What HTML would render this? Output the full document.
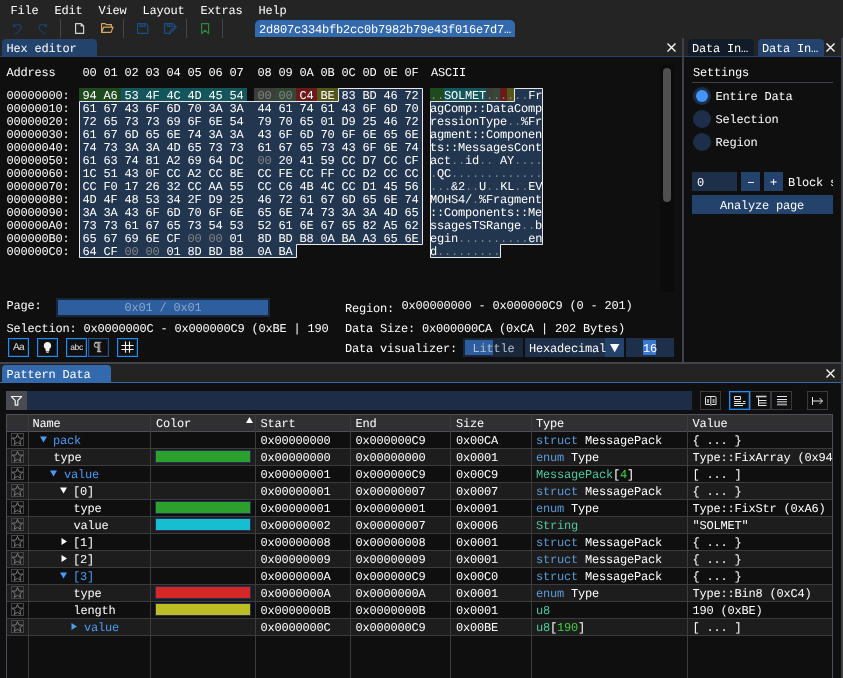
<!DOCTYPE html><html><head><meta charset="utf-8"><style>
html,body{margin:0;padding:0;}
body{width:843px;height:678px;overflow:hidden;position:relative;background:#0f0f0f;font-family:"Liberation Mono",monospace;font-size:12px;letter-spacing:-0.2px;text-rendering:geometricPrecision;color:#fff;}
.t{position:absolute;white-space:pre;line-height:13px;}
.r{position:absolute;}
svg{position:absolute;overflow:visible;}
</style></head><body><div style="position:absolute;left:0;top:0;width:843px;height:678px;will-change:transform;">
<div class="r" style="left:0px;top:0px;width:843px;height:56px;background:#242424;"></div>
<div class="t" style="left:10.5px;top:5.40px;color:#fff;">File</div>
<div class="t" style="left:54.5px;top:5.40px;color:#fff;">Edit</div>
<div class="t" style="left:98.5px;top:5.40px;color:#fff;">View</div>
<div class="t" style="left:142.5px;top:5.40px;color:#fff;">Layout</div>
<div class="t" style="left:200.5px;top:5.40px;color:#fff;">Extras</div>
<div class="t" style="left:258.5px;top:5.40px;color:#fff;">Help</div>
<div class="r" style="left:60px;top:19px;width:1px;height:19px;background:#474747;"></div>
<div class="r" style="left:123px;top:19px;width:1px;height:19px;background:#474747;"></div>
<div class="r" style="left:186px;top:19px;width:1px;height:19px;background:#474747;"></div>
<div class="r" style="left:222px;top:19px;width:1px;height:19px;background:#474747;"></div>
<svg style="left:0;top:0" width="843" height="60"><g stroke="#173e69" stroke-width="1.3" fill="none" stroke-linecap="round"><path d="M14.5 25.3C17 23.6 21.3 24.6 21.1 27.8C21 29.6 18.5 31.8 15.3 33.8"/></g><path d="M12.8 23.2L13.2 27.4L17.2 26.6Z" fill="#173e69"/><g transform="translate(60.2 0) scale(-1 1)"><g stroke="#173e69" stroke-width="1.3" fill="none" stroke-linecap="round"><path d="M14.5 25.3C17 23.6 21.3 24.6 21.1 27.8C21 29.6 18.5 31.8 15.3 33.8"/></g><path d="M12.8 23.2L13.2 27.4L17.2 26.6Z" fill="#173e69"/></g><path d="M75.6 23.6H81.2L83.6 26V33.4H75.6Z M81.2 23.6V26H83.6" fill="none" stroke="#d2d2d2" stroke-width="1.2" stroke-linejoin="round"/><path d="M101.6 32.4V23.6H105.2L106.2 24.6H111.4V26.6 M101.6 32.4L103.6 27.2H113L111 32.4Z" fill="none" stroke="#d8a860" stroke-width="1.2" stroke-linejoin="round"/><path d="M137.6 23.6H146L147.8 25.4V33.4H137.6Z M140.2 23.6V26.4H145V23.6" fill="none" stroke="#1b4c84" stroke-width="1.2" stroke-linejoin="round"/><path d="M142 26.4V24.2" stroke="#1b4c84" stroke-width="1.2"/><path d="M170 33.4H164.6V23.6H173L174.6 25.2V26.5 M167.2 23.6V26.4H172V23.6 M169.5 24.2V26.2" fill="none" stroke="#1b4c84" stroke-width="1.2" stroke-linejoin="round"/><path d="M169.4 34L170 31.2L175.2 26L176.4 27.2L171.2 32.4Z" fill="none" stroke="#1b4c84" stroke-width="1.1" stroke-linejoin="round"/><path d="M201.6 23.6H208.6V33.6L205.1 30.2L201.6 33.6Z" fill="none" stroke="#2a8a38" stroke-width="1.2" stroke-linejoin="round"/></svg>
<div class="r" style="left:255px;top:20px;width:260px;height:17px;background:#3369ad;border-radius:5px 5px 0 0;"></div>
<div class="t" style="left:259px;top:24.40px;color:#fff;">2d807c334bfb2cc0b7982b79e43f016e7d7…</div>
<div class="r" style="left:2px;top:39px;width:95px;height:17px;background:#23436c;border-radius:4px 4px 0 0;"></div>
<div class="t" style="left:6.5px;top:43.40px;color:#fff;">Hex editor</div>
<div class="r" style="left:0px;top:56px;width:682px;height:1px;background:#23436c;"></div>
<div class="r" style="left:684px;top:56px;width:157px;height:1px;background:#23436c;"></div>
<svg style="left:667px;top:43px" width="9" height="9"><path d="M0.5 0.5L8.5 8.5M8.5 0.5L0.5 8.5" stroke="#fff" stroke-width="1.3"/></svg>
<div class="r" style="left:682px;top:38px;width:2px;height:324px;background:#404048;"></div>
<div class="r" style="left:841px;top:38px;width:2px;height:640px;background:#404048;"></div>
<div class="t" style="left:6.5px;top:67.40px;color:#fff;">Address</div>
<div class="t" style="left:82.5px;top:67.40px;color:#fff;">00 01 02 03 04 05 06 07</div>
<div class="t" style="left:257.5px;top:67.40px;color:#fff;">08 09 0A 0B 0C 0D 0E 0F</div>
<div class="t" style="left:431px;top:67.40px;color:#fff;">ASCII</div>
<svg style="left:0;top:0" width="843" height="678"><path d="M338 88H423V245H297V258H79V101H338Z" fill="#22364f"/><path d="M514 88H543V245H501V258H430V101H514Z" fill="#22364f"/></svg>
<div class="r" style="left:79px;top:88px;width:42px;height:13px;background:#1e4a1e;"></div>
<div class="r" style="left:430px;top:88px;width:14px;height:13px;background:#1e4a1e;"></div>
<div class="r" style="left:121px;top:88px;width:126px;height:13px;background:#13565c;"></div>
<div class="r" style="left:444px;top:88px;width:42px;height:13px;background:#13565c;"></div>
<div class="r" style="left:254px;top:88px;width:21px;height:13px;background:#3b3f3b;"></div>
<div class="r" style="left:486px;top:88px;width:7px;height:13px;background:#3b3f3b;"></div>
<div class="r" style="left:275px;top:88px;width:21px;height:13px;background:#354838;"></div>
<div class="r" style="left:493px;top:88px;width:7px;height:13px;background:#354838;"></div>
<div class="r" style="left:296px;top:88px;width:21px;height:13px;background:#6a1a1a;"></div>
<div class="r" style="left:500px;top:88px;width:7px;height:13px;background:#6a1a1a;"></div>
<div class="r" style="left:317px;top:88px;width:21px;height:13px;background:#55561a;"></div>
<div class="r" style="left:507px;top:88px;width:7px;height:13px;background:#55561a;"></div>
<svg style="left:0;top:0" width="843" height="678"><path d="M338.5 88.5H422.5V244.5H296.5V257.5H79.5V101.5H338.5Z" fill="none" stroke="#e8e8e8" stroke-width="1"/><path d="M514.5 88.5H542.5V244.5H500.5V257.5H430.5V101.5H514.5Z" fill="none" stroke="#e8e8e8" stroke-width="1"/></svg>
<div class="t" style="left:6.5px;top:90.40px;color:#fff;">00000000:</div>
<div class="t" style="left:82.5px;top:90.40px;color:#fff;">94</div>
<div class="t" style="left:103.5px;top:90.40px;color:#fff;">A6</div>
<div class="t" style="left:124.5px;top:90.40px;color:#fff;">53</div>
<div class="t" style="left:145.5px;top:90.40px;color:#fff;">4F</div>
<div class="t" style="left:166.5px;top:90.40px;color:#fff;">4C</div>
<div class="t" style="left:187.5px;top:90.40px;color:#fff;">4D</div>
<div class="t" style="left:208.5px;top:90.40px;color:#fff;">45</div>
<div class="t" style="left:229.5px;top:90.40px;color:#fff;">54</div>
<div class="t" style="left:257.5px;top:90.40px;color:#858585;">00</div>
<div class="t" style="left:278.5px;top:90.40px;color:#858585;">00</div>
<div class="t" style="left:299.5px;top:90.40px;color:#fff;">C4</div>
<div class="t" style="left:320.5px;top:90.40px;color:#fff;">BE</div>
<div class="t" style="left:341.5px;top:90.40px;color:#fff;">83</div>
<div class="t" style="left:362.5px;top:90.40px;color:#fff;">BD</div>
<div class="t" style="left:383.5px;top:90.40px;color:#fff;">46</div>
<div class="t" style="left:404.5px;top:90.40px;color:#fff;">72</div>
<div class="t" style="left:430px;top:90.40px;color:#fff;"><span style="color:#858585">.</span><span style="color:#858585">.</span>SOLMET<span style="color:#858585">.</span><span style="color:#858585">.</span><span style="color:#858585">.</span><span style="color:#858585">.</span><span style="color:#858585">.</span><span style="color:#858585">.</span>Fr</div>
<div class="t" style="left:6.5px;top:103.40px;color:#fff;">00000010:</div>
<div class="t" style="left:82.5px;top:103.40px;color:#fff;">61</div>
<div class="t" style="left:103.5px;top:103.40px;color:#fff;">67</div>
<div class="t" style="left:124.5px;top:103.40px;color:#fff;">43</div>
<div class="t" style="left:145.5px;top:103.40px;color:#fff;">6F</div>
<div class="t" style="left:166.5px;top:103.40px;color:#fff;">6D</div>
<div class="t" style="left:187.5px;top:103.40px;color:#fff;">70</div>
<div class="t" style="left:208.5px;top:103.40px;color:#fff;">3A</div>
<div class="t" style="left:229.5px;top:103.40px;color:#fff;">3A</div>
<div class="t" style="left:257.5px;top:103.40px;color:#fff;">44</div>
<div class="t" style="left:278.5px;top:103.40px;color:#fff;">61</div>
<div class="t" style="left:299.5px;top:103.40px;color:#fff;">74</div>
<div class="t" style="left:320.5px;top:103.40px;color:#fff;">61</div>
<div class="t" style="left:341.5px;top:103.40px;color:#fff;">43</div>
<div class="t" style="left:362.5px;top:103.40px;color:#fff;">6F</div>
<div class="t" style="left:383.5px;top:103.40px;color:#fff;">6D</div>
<div class="t" style="left:404.5px;top:103.40px;color:#fff;">70</div>
<div class="t" style="left:430px;top:103.40px;color:#fff;">agComp::DataComp</div>
<div class="t" style="left:6.5px;top:116.40px;color:#fff;">00000020:</div>
<div class="t" style="left:82.5px;top:116.40px;color:#fff;">72</div>
<div class="t" style="left:103.5px;top:116.40px;color:#fff;">65</div>
<div class="t" style="left:124.5px;top:116.40px;color:#fff;">73</div>
<div class="t" style="left:145.5px;top:116.40px;color:#fff;">73</div>
<div class="t" style="left:166.5px;top:116.40px;color:#fff;">69</div>
<div class="t" style="left:187.5px;top:116.40px;color:#fff;">6F</div>
<div class="t" style="left:208.5px;top:116.40px;color:#fff;">6E</div>
<div class="t" style="left:229.5px;top:116.40px;color:#fff;">54</div>
<div class="t" style="left:257.5px;top:116.40px;color:#fff;">79</div>
<div class="t" style="left:278.5px;top:116.40px;color:#fff;">70</div>
<div class="t" style="left:299.5px;top:116.40px;color:#fff;">65</div>
<div class="t" style="left:320.5px;top:116.40px;color:#fff;">01</div>
<div class="t" style="left:341.5px;top:116.40px;color:#fff;">D9</div>
<div class="t" style="left:362.5px;top:116.40px;color:#fff;">25</div>
<div class="t" style="left:383.5px;top:116.40px;color:#fff;">46</div>
<div class="t" style="left:404.5px;top:116.40px;color:#fff;">72</div>
<div class="t" style="left:430px;top:116.40px;color:#fff;">ressionType<span style="color:#858585">.</span><span style="color:#858585">.</span>%Fr</div>
<div class="t" style="left:6.5px;top:129.40px;color:#fff;">00000030:</div>
<div class="t" style="left:82.5px;top:129.40px;color:#fff;">61</div>
<div class="t" style="left:103.5px;top:129.40px;color:#fff;">67</div>
<div class="t" style="left:124.5px;top:129.40px;color:#fff;">6D</div>
<div class="t" style="left:145.5px;top:129.40px;color:#fff;">65</div>
<div class="t" style="left:166.5px;top:129.40px;color:#fff;">6E</div>
<div class="t" style="left:187.5px;top:129.40px;color:#fff;">74</div>
<div class="t" style="left:208.5px;top:129.40px;color:#fff;">3A</div>
<div class="t" style="left:229.5px;top:129.40px;color:#fff;">3A</div>
<div class="t" style="left:257.5px;top:129.40px;color:#fff;">43</div>
<div class="t" style="left:278.5px;top:129.40px;color:#fff;">6F</div>
<div class="t" style="left:299.5px;top:129.40px;color:#fff;">6D</div>
<div class="t" style="left:320.5px;top:129.40px;color:#fff;">70</div>
<div class="t" style="left:341.5px;top:129.40px;color:#fff;">6F</div>
<div class="t" style="left:362.5px;top:129.40px;color:#fff;">6E</div>
<div class="t" style="left:383.5px;top:129.40px;color:#fff;">65</div>
<div class="t" style="left:404.5px;top:129.40px;color:#fff;">6E</div>
<div class="t" style="left:430px;top:129.40px;color:#fff;">agment::Componen</div>
<div class="t" style="left:6.5px;top:142.40px;color:#fff;">00000040:</div>
<div class="t" style="left:82.5px;top:142.40px;color:#fff;">74</div>
<div class="t" style="left:103.5px;top:142.40px;color:#fff;">73</div>
<div class="t" style="left:124.5px;top:142.40px;color:#fff;">3A</div>
<div class="t" style="left:145.5px;top:142.40px;color:#fff;">3A</div>
<div class="t" style="left:166.5px;top:142.40px;color:#fff;">4D</div>
<div class="t" style="left:187.5px;top:142.40px;color:#fff;">65</div>
<div class="t" style="left:208.5px;top:142.40px;color:#fff;">73</div>
<div class="t" style="left:229.5px;top:142.40px;color:#fff;">73</div>
<div class="t" style="left:257.5px;top:142.40px;color:#fff;">61</div>
<div class="t" style="left:278.5px;top:142.40px;color:#fff;">67</div>
<div class="t" style="left:299.5px;top:142.40px;color:#fff;">65</div>
<div class="t" style="left:320.5px;top:142.40px;color:#fff;">73</div>
<div class="t" style="left:341.5px;top:142.40px;color:#fff;">43</div>
<div class="t" style="left:362.5px;top:142.40px;color:#fff;">6F</div>
<div class="t" style="left:383.5px;top:142.40px;color:#fff;">6E</div>
<div class="t" style="left:404.5px;top:142.40px;color:#fff;">74</div>
<div class="t" style="left:430px;top:142.40px;color:#fff;">ts::MessagesCont</div>
<div class="t" style="left:6.5px;top:155.40px;color:#fff;">00000050:</div>
<div class="t" style="left:82.5px;top:155.40px;color:#fff;">61</div>
<div class="t" style="left:103.5px;top:155.40px;color:#fff;">63</div>
<div class="t" style="left:124.5px;top:155.40px;color:#fff;">74</div>
<div class="t" style="left:145.5px;top:155.40px;color:#fff;">81</div>
<div class="t" style="left:166.5px;top:155.40px;color:#fff;">A2</div>
<div class="t" style="left:187.5px;top:155.40px;color:#fff;">69</div>
<div class="t" style="left:208.5px;top:155.40px;color:#fff;">64</div>
<div class="t" style="left:229.5px;top:155.40px;color:#fff;">DC</div>
<div class="t" style="left:257.5px;top:155.40px;color:#858585;">00</div>
<div class="t" style="left:278.5px;top:155.40px;color:#fff;">20</div>
<div class="t" style="left:299.5px;top:155.40px;color:#fff;">41</div>
<div class="t" style="left:320.5px;top:155.40px;color:#fff;">59</div>
<div class="t" style="left:341.5px;top:155.40px;color:#fff;">CC</div>
<div class="t" style="left:362.5px;top:155.40px;color:#fff;">D7</div>
<div class="t" style="left:383.5px;top:155.40px;color:#fff;">CC</div>
<div class="t" style="left:404.5px;top:155.40px;color:#fff;">CF</div>
<div class="t" style="left:430px;top:155.40px;color:#fff;">act<span style="color:#858585">.</span><span style="color:#858585">.</span>id<span style="color:#858585">.</span><span style="color:#858585">.</span> AY<span style="color:#858585">.</span><span style="color:#858585">.</span><span style="color:#858585">.</span><span style="color:#858585">.</span></div>
<div class="t" style="left:6.5px;top:168.40px;color:#fff;">00000060:</div>
<div class="t" style="left:82.5px;top:168.40px;color:#fff;">1C</div>
<div class="t" style="left:103.5px;top:168.40px;color:#fff;">51</div>
<div class="t" style="left:124.5px;top:168.40px;color:#fff;">43</div>
<div class="t" style="left:145.5px;top:168.40px;color:#fff;">0F</div>
<div class="t" style="left:166.5px;top:168.40px;color:#fff;">CC</div>
<div class="t" style="left:187.5px;top:168.40px;color:#fff;">A2</div>
<div class="t" style="left:208.5px;top:168.40px;color:#fff;">CC</div>
<div class="t" style="left:229.5px;top:168.40px;color:#fff;">8E</div>
<div class="t" style="left:257.5px;top:168.40px;color:#fff;">CC</div>
<div class="t" style="left:278.5px;top:168.40px;color:#fff;">FE</div>
<div class="t" style="left:299.5px;top:168.40px;color:#fff;">CC</div>
<div class="t" style="left:320.5px;top:168.40px;color:#fff;">FF</div>
<div class="t" style="left:341.5px;top:168.40px;color:#fff;">CC</div>
<div class="t" style="left:362.5px;top:168.40px;color:#fff;">D2</div>
<div class="t" style="left:383.5px;top:168.40px;color:#fff;">CC</div>
<div class="t" style="left:404.5px;top:168.40px;color:#fff;">CC</div>
<div class="t" style="left:430px;top:168.40px;color:#fff;"><span style="color:#858585">.</span>QC<span style="color:#858585">.</span><span style="color:#858585">.</span><span style="color:#858585">.</span><span style="color:#858585">.</span><span style="color:#858585">.</span><span style="color:#858585">.</span><span style="color:#858585">.</span><span style="color:#858585">.</span><span style="color:#858585">.</span><span style="color:#858585">.</span><span style="color:#858585">.</span><span style="color:#858585">.</span><span style="color:#858585">.</span></div>
<div class="t" style="left:6.5px;top:181.40px;color:#fff;">00000070:</div>
<div class="t" style="left:82.5px;top:181.40px;color:#fff;">CC</div>
<div class="t" style="left:103.5px;top:181.40px;color:#fff;">F0</div>
<div class="t" style="left:124.5px;top:181.40px;color:#fff;">17</div>
<div class="t" style="left:145.5px;top:181.40px;color:#fff;">26</div>
<div class="t" style="left:166.5px;top:181.40px;color:#fff;">32</div>
<div class="t" style="left:187.5px;top:181.40px;color:#fff;">CC</div>
<div class="t" style="left:208.5px;top:181.40px;color:#fff;">AA</div>
<div class="t" style="left:229.5px;top:181.40px;color:#fff;">55</div>
<div class="t" style="left:257.5px;top:181.40px;color:#fff;">CC</div>
<div class="t" style="left:278.5px;top:181.40px;color:#fff;">C6</div>
<div class="t" style="left:299.5px;top:181.40px;color:#fff;">4B</div>
<div class="t" style="left:320.5px;top:181.40px;color:#fff;">4C</div>
<div class="t" style="left:341.5px;top:181.40px;color:#fff;">CC</div>
<div class="t" style="left:362.5px;top:181.40px;color:#fff;">D1</div>
<div class="t" style="left:383.5px;top:181.40px;color:#fff;">45</div>
<div class="t" style="left:404.5px;top:181.40px;color:#fff;">56</div>
<div class="t" style="left:430px;top:181.40px;color:#fff;"><span style="color:#858585">.</span><span style="color:#858585">.</span><span style="color:#858585">.</span>&amp;2<span style="color:#858585">.</span><span style="color:#858585">.</span>U<span style="color:#858585">.</span><span style="color:#858585">.</span>KL<span style="color:#858585">.</span><span style="color:#858585">.</span>EV</div>
<div class="t" style="left:6.5px;top:194.40px;color:#fff;">00000080:</div>
<div class="t" style="left:82.5px;top:194.40px;color:#fff;">4D</div>
<div class="t" style="left:103.5px;top:194.40px;color:#fff;">4F</div>
<div class="t" style="left:124.5px;top:194.40px;color:#fff;">48</div>
<div class="t" style="left:145.5px;top:194.40px;color:#fff;">53</div>
<div class="t" style="left:166.5px;top:194.40px;color:#fff;">34</div>
<div class="t" style="left:187.5px;top:194.40px;color:#fff;">2F</div>
<div class="t" style="left:208.5px;top:194.40px;color:#fff;">D9</div>
<div class="t" style="left:229.5px;top:194.40px;color:#fff;">25</div>
<div class="t" style="left:257.5px;top:194.40px;color:#fff;">46</div>
<div class="t" style="left:278.5px;top:194.40px;color:#fff;">72</div>
<div class="t" style="left:299.5px;top:194.40px;color:#fff;">61</div>
<div class="t" style="left:320.5px;top:194.40px;color:#fff;">67</div>
<div class="t" style="left:341.5px;top:194.40px;color:#fff;">6D</div>
<div class="t" style="left:362.5px;top:194.40px;color:#fff;">65</div>
<div class="t" style="left:383.5px;top:194.40px;color:#fff;">6E</div>
<div class="t" style="left:404.5px;top:194.40px;color:#fff;">74</div>
<div class="t" style="left:430px;top:194.40px;color:#fff;">MOHS4/<span style="color:#858585">.</span>%Fragment</div>
<div class="t" style="left:6.5px;top:207.40px;color:#fff;">00000090:</div>
<div class="t" style="left:82.5px;top:207.40px;color:#fff;">3A</div>
<div class="t" style="left:103.5px;top:207.40px;color:#fff;">3A</div>
<div class="t" style="left:124.5px;top:207.40px;color:#fff;">43</div>
<div class="t" style="left:145.5px;top:207.40px;color:#fff;">6F</div>
<div class="t" style="left:166.5px;top:207.40px;color:#fff;">6D</div>
<div class="t" style="left:187.5px;top:207.40px;color:#fff;">70</div>
<div class="t" style="left:208.5px;top:207.40px;color:#fff;">6F</div>
<div class="t" style="left:229.5px;top:207.40px;color:#fff;">6E</div>
<div class="t" style="left:257.5px;top:207.40px;color:#fff;">65</div>
<div class="t" style="left:278.5px;top:207.40px;color:#fff;">6E</div>
<div class="t" style="left:299.5px;top:207.40px;color:#fff;">74</div>
<div class="t" style="left:320.5px;top:207.40px;color:#fff;">73</div>
<div class="t" style="left:341.5px;top:207.40px;color:#fff;">3A</div>
<div class="t" style="left:362.5px;top:207.40px;color:#fff;">3A</div>
<div class="t" style="left:383.5px;top:207.40px;color:#fff;">4D</div>
<div class="t" style="left:404.5px;top:207.40px;color:#fff;">65</div>
<div class="t" style="left:430px;top:207.40px;color:#fff;">::Components::Me</div>
<div class="t" style="left:6.5px;top:220.40px;color:#fff;">000000A0:</div>
<div class="t" style="left:82.5px;top:220.40px;color:#fff;">73</div>
<div class="t" style="left:103.5px;top:220.40px;color:#fff;">73</div>
<div class="t" style="left:124.5px;top:220.40px;color:#fff;">61</div>
<div class="t" style="left:145.5px;top:220.40px;color:#fff;">67</div>
<div class="t" style="left:166.5px;top:220.40px;color:#fff;">65</div>
<div class="t" style="left:187.5px;top:220.40px;color:#fff;">73</div>
<div class="t" style="left:208.5px;top:220.40px;color:#fff;">54</div>
<div class="t" style="left:229.5px;top:220.40px;color:#fff;">53</div>
<div class="t" style="left:257.5px;top:220.40px;color:#fff;">52</div>
<div class="t" style="left:278.5px;top:220.40px;color:#fff;">61</div>
<div class="t" style="left:299.5px;top:220.40px;color:#fff;">6E</div>
<div class="t" style="left:320.5px;top:220.40px;color:#fff;">67</div>
<div class="t" style="left:341.5px;top:220.40px;color:#fff;">65</div>
<div class="t" style="left:362.5px;top:220.40px;color:#fff;">82</div>
<div class="t" style="left:383.5px;top:220.40px;color:#fff;">A5</div>
<div class="t" style="left:404.5px;top:220.40px;color:#fff;">62</div>
<div class="t" style="left:430px;top:220.40px;color:#fff;">ssagesTSRange<span style="color:#858585">.</span><span style="color:#858585">.</span>b</div>
<div class="t" style="left:6.5px;top:233.40px;color:#fff;">000000B0:</div>
<div class="t" style="left:82.5px;top:233.40px;color:#fff;">65</div>
<div class="t" style="left:103.5px;top:233.40px;color:#fff;">67</div>
<div class="t" style="left:124.5px;top:233.40px;color:#fff;">69</div>
<div class="t" style="left:145.5px;top:233.40px;color:#fff;">6E</div>
<div class="t" style="left:166.5px;top:233.40px;color:#fff;">CF</div>
<div class="t" style="left:187.5px;top:233.40px;color:#858585;">00</div>
<div class="t" style="left:208.5px;top:233.40px;color:#858585;">00</div>
<div class="t" style="left:229.5px;top:233.40px;color:#fff;">01</div>
<div class="t" style="left:257.5px;top:233.40px;color:#fff;">8D</div>
<div class="t" style="left:278.5px;top:233.40px;color:#fff;">BD</div>
<div class="t" style="left:299.5px;top:233.40px;color:#fff;">B8</div>
<div class="t" style="left:320.5px;top:233.40px;color:#fff;">0A</div>
<div class="t" style="left:341.5px;top:233.40px;color:#fff;">BA</div>
<div class="t" style="left:362.5px;top:233.40px;color:#fff;">A3</div>
<div class="t" style="left:383.5px;top:233.40px;color:#fff;">65</div>
<div class="t" style="left:404.5px;top:233.40px;color:#fff;">6E</div>
<div class="t" style="left:430px;top:233.40px;color:#fff;">egin<span style="color:#858585">.</span><span style="color:#858585">.</span><span style="color:#858585">.</span><span style="color:#858585">.</span><span style="color:#858585">.</span><span style="color:#858585">.</span><span style="color:#858585">.</span><span style="color:#858585">.</span><span style="color:#858585">.</span><span style="color:#858585">.</span>en</div>
<div class="t" style="left:6.5px;top:246.40px;color:#fff;">000000C0:</div>
<div class="t" style="left:82.5px;top:246.40px;color:#fff;">64</div>
<div class="t" style="left:103.5px;top:246.40px;color:#fff;">CF</div>
<div class="t" style="left:124.5px;top:246.40px;color:#858585;">00</div>
<div class="t" style="left:145.5px;top:246.40px;color:#858585;">00</div>
<div class="t" style="left:166.5px;top:246.40px;color:#fff;">01</div>
<div class="t" style="left:187.5px;top:246.40px;color:#fff;">8D</div>
<div class="t" style="left:208.5px;top:246.40px;color:#fff;">BD</div>
<div class="t" style="left:229.5px;top:246.40px;color:#fff;">B8</div>
<div class="t" style="left:257.5px;top:246.40px;color:#fff;">0A</div>
<div class="t" style="left:278.5px;top:246.40px;color:#fff;">BA</div>
<div class="t" style="left:430px;top:246.40px;color:#fff;">d<span style="color:#858585">.</span><span style="color:#858585">.</span><span style="color:#858585">.</span><span style="color:#858585">.</span><span style="color:#858585">.</span><span style="color:#858585">.</span><span style="color:#858585">.</span><span style="color:#858585">.</span><span style="color:#858585">.</span></div>
<div class="r" style="left:660px;top:65px;width:14px;height:227px;background:#0b0b0b;"></div>
<div class="r" style="left:663px;top:68px;width:8px;height:134px;background:#4f4f4f;border-radius:4px;"></div>
<div class="t" style="left:6.5px;top:300.40px;color:#fff;">Page:</div>
<div class="r" style="left:56px;top:298px;width:214px;height:19px;background:#19273b;"></div>
<div class="r" style="left:58px;top:300px;width:210px;height:15px;background:#2f5e9e;"></div>
<div class="t" style="left:124.5px;top:302.40px;color:#8aa8d0;">0x01 / 0x01</div>
<div class="t" style="left:6.5px;top:323.40px;color:#fff;">Selection: 0x0000000C - 0x000000C9 (0xBE | 190</div>
<div class="t" style="left:345px;top:303.40px;color:#fff;">Region:</div>
<div class="t" style="left:401.5px;top:300.40px;color:#fff;">0x00000000 - 0x000000C9 (0 - 201)</div>
<div class="t" style="left:345px;top:323.40px;color:#fff;">Data Size: 0x000000CA (0xCA | 202 Bytes)</div>
<div class="t" style="left:345px;top:343.40px;color:#fff;">Data visualizer:</div>
<div class="r" style="left:8px;top:338px;width:19px;height:17px;border:1px solid #1e8fff;box-shadow:inset 0 0 0 1px #1e8fff33;"></div>
<div class="r" style="left:37px;top:338px;width:19px;height:17px;border:1px solid #1e8fff;box-shadow:inset 0 0 0 1px #1e8fff33;"></div>
<div class="r" style="left:66px;top:338px;width:19px;height:17px;border:1px solid #1e8fff;box-shadow:inset 0 0 0 1px #1e8fff33;"></div>
<div class="r" style="left:88px;top:338px;width:19px;height:17px;border:1px solid #24548a;box-shadow:inset 0 0 0 1px #24548a33;"></div>
<div class="r" style="left:117px;top:338px;width:19px;height:17px;border:1px solid #1e8fff;box-shadow:inset 0 0 0 1px #1e8fff33;"></div>
<div class="t" style="left:8px;top:338px;width:21px;height:19px;line-height:19px;text-align:center;font-family:'Liberation Sans',sans-serif;font-size:10px;letter-spacing:-0.5px;color:#e0e0e0;">Aa</div>
<div class="t" style="left:66px;top:338px;width:21px;height:19px;line-height:19px;text-align:center;font-family:'Liberation Sans',sans-serif;font-size:8.5px;letter-spacing:-0.4px;color:#e0e0e0;">abc</div>
<svg style="left:0;top:330px" width="843" height="30"><path d="M47.5 12C45.4 12 43.8 13.7 43.8 15.7C43.8 17.2 44.7 18.2 45.6 19V21H49.4V19C50.3 18.2 51.2 17.2 51.2 15.7C51.2 13.7 49.6 12 47.5 12Z" fill="#f0f0f0"/><path d="M45.9 21.5H49.1V22.1L48.4 22.8H46.6L45.9 22.1Z" fill="#f0f0f0"/><defs><linearGradient id="pg" x1="0" x2="1" y1="0" y2="0"><stop offset="0" stop-color="#c8c8c8"/><stop offset="1" stop-color="#505050"/></linearGradient></defs><path d="M97.8 12.6C95.2 12.6 94.3 13.9 94.3 15C94.3 16.3 95.3 17.3 97.8 17.3" fill="none" stroke="#b0b0b0" stroke-width="1.1"/><path d="M94.8 12.4H101.2" stroke="#b8b8b8" stroke-width="1.2"/><rect x="97.6" y="12.4" width="2.9" height="9.2" fill="url(#pg)"/><path d="M97 21.6H101.2" stroke="#b8b8b8" stroke-width="1.3"/><path d="M125.5 11.6V22.8M129.5 11.6V22.8M121.4 15.5H133.6M121.4 19.5H133.6" stroke="#f4f4f4" stroke-width="1.1"/></svg>
<div class="r" style="left:463px;top:338px;width:60px;height:19px;background:#19273b;"></div>
<div class="r" style="left:465px;top:340px;width:28px;height:15px;background:#2f5e9e;"></div>
<div class="t" style="left:472.5px;top:343.40px;color:#b4c0d0;">Little</div>
<div class="r" style="left:525px;top:338px;width:99px;height:19px;background:#1d2f49;"></div>
<div class="r" style="left:605px;top:338px;width:19px;height:19px;background:#23436c;"></div>
<div class="t" style="left:529px;top:343.40px;color:#fff;">Hexadecimal</div>
<svg style="left:610px;top:343.5px" width="10" height="9"><path d="M0 0H9.4L4.7 8.2Z" fill="#fff"/></svg>
<div class="r" style="left:626px;top:338px;width:48px;height:19px;background:#1d2f49;"></div>
<div class="r" style="left:643px;top:340px;width:13px;height:15px;background:#3a78d0;"></div>
<div class="t" style="left:643px;top:343.40px;color:#fff;">16</div>
<div class="r" style="left:688px;top:39px;width:66px;height:17px;background:#121b28;border-radius:4px 4px 0 0;"></div>
<div class="r" style="left:758px;top:39px;width:66px;height:17px;background:#23436c;border-radius:4px 4px 0 0;"></div>
<div class="t" style="left:692px;top:43.40px;color:#fff;">Data In…</div>
<div class="t" style="left:762px;top:43.40px;color:#fff;">Data In…</div>
<svg style="left:826px;top:43px" width="9" height="9"><path d="M0.5 0.5L8.5 8.5M8.5 0.5L0.5 8.5" stroke="#fff" stroke-width="1.3"/></svg>
<div class="t" style="left:693px;top:67.40px;color:#fff;">Settings</div>
<div class="r" style="left:692px;top:82px;width:141px;height:1px;background:#3e3e47;"></div>
<div class="r" style="left:693px;top:87px;width:18px;height:18px;border-radius:50%;background:#1c2e4a;"></div>
<div class="r" style="left:696px;top:90px;width:12px;height:12px;border-radius:50%;background:#4296fa;"></div>
<div class="t" style="left:715.5px;top:91.40px;color:#fff;">Entire Data</div>
<div class="r" style="left:693px;top:110px;width:18px;height:18px;border-radius:50%;background:#1c2e4a;"></div>
<div class="t" style="left:715.5px;top:114.40px;color:#fff;">Selection</div>
<div class="r" style="left:693px;top:133px;width:18px;height:18px;border-radius:50%;background:#1c2e4a;"></div>
<div class="t" style="left:715.5px;top:137.40px;color:#fff;">Region</div>
<div class="r" style="left:692px;top:172px;width:45px;height:19px;background:#1d2f49;"></div>
<div class="t" style="left:697px;top:177.40px;color:#fff;">0</div>
<div class="r" style="left:741px;top:172px;width:19px;height:19px;background:#23436c;"></div>
<div class="r" style="left:748px;top:182px;width:6px;height:1px;background:#f0f0f0;"></div>
<div class="r" style="left:764px;top:172px;width:19px;height:19px;background:#23436c;"></div>
<div class="t" style="left:770px;top:177.40px;color:#fff;">+</div>
<div class="t" style="left:788px;top:177.40px;color:#fff;width:45px;overflow:hidden;">Block s</div>
<div class="r" style="left:692px;top:195px;width:141px;height:19px;background:#23436c;"></div>
<div class="t" style="left:720px;top:200.40px;color:#fff;">Analyze page</div>
<div class="r" style="left:0px;top:362px;width:843px;height:2px;background:#434349;"></div>
<div class="r" style="left:0px;top:364px;width:841px;height:18px;background:#232323;"></div>
<div class="r" style="left:2px;top:365px;width:109px;height:17px;background:#3369ad;border-radius:4px 4px 0 0;"></div>
<div class="t" style="left:6.5px;top:369.40px;color:#fff;">Pattern Data</div>
<div class="r" style="left:0px;top:382px;width:841px;height:1px;background:#3369ad;"></div>
<svg style="left:826px;top:369px" width="9" height="9"><path d="M0.5 0.5L8.5 8.5M8.5 0.5L0.5 8.5" stroke="#fff" stroke-width="1.3"/></svg>
<div class="r" style="left:6px;top:391px;width:21px;height:19px;background:#4a4a52;"></div>
<div class="r" style="left:27px;top:391px;width:665px;height:19px;background:#1d2d47;"></div>
<svg style="left:0;top:385px" width="843" height="30"><path d="M11.4 11.5H21.6L17.8 15.6V20.2H15.2V15.6Z" fill="none" stroke="#f0f0f0" stroke-width="1.2" stroke-linejoin="round"/></svg>
<div class="r" style="left:700px;top:391px;width:19px;height:17px;border:1px solid #3a3a3e;"></div>
<div class="r" style="left:729px;top:391px;width:19px;height:17px;border:1px solid #1e8fff;box-shadow:inset 0 0 0 1px #1e8fff55;"></div>
<div class="r" style="left:750px;top:391px;width:19px;height:17px;border:1px solid #3a3a3e;"></div>
<div class="r" style="left:771px;top:391px;width:19px;height:17px;border:1px solid #3a3a3e;"></div>
<div class="r" style="left:807px;top:391px;width:19px;height:17px;border:1px solid #3a3a3e;"></div>
<svg style="left:0;top:0" width="843" height="678"><g fill="none" stroke="#e6e6e6" stroke-width="1"><path d="M705.5 397.5Q705.5 396.5 706.5 396.5H715Q716 396.5 716 397.5V404.5H711.5L710.8 405.5L710.1 404.5H705.5Z M710.8 397V404"/></g><rect x="707" y="399" width="2" height="4" fill="#9a9a9a"/><rect x="712.5" y="399" width="2" height="4" fill="#9a9a9a"/><g fill="none" stroke="#e6e6e6" stroke-width="1"><path d="M734.5 396.5H740.5V399.5H734.5Z"/><path d="M734 401.5H741M743 401.5H745.5M734 403.5H745.5M734 405.5H743"/><path d="M756 396.5H766.5" stroke="#cfcfcf" stroke-width="1.6"/><path d="M758.5 397.5V405.5M759 400.5H766.5M759 403H766.5M758 405.5H766.5"/><path d="M777 396.5H787M777 399.5H787M777 401.8H787"/><path d="M777 404.5H787" stroke="#9a9a9a" stroke-width="1.8"/><path d="M812.5 397V405M812.5 401H822.5M819.5 398L822.5 401L819.5 404"/></g></svg>
<div class="r" style="left:6px;top:414px;width:827px;height:17px;background:#303033;"></div>
<div class="r" style="left:6px;top:448px;width:827px;height:17px;background:#1d1d1d;"></div>
<div class="r" style="left:6px;top:482px;width:827px;height:17px;background:#1d1d1d;"></div>
<div class="r" style="left:6px;top:516px;width:827px;height:17px;background:#1d1d1d;"></div>
<div class="r" style="left:6px;top:550px;width:827px;height:17px;background:#1d1d1d;"></div>
<div class="r" style="left:6px;top:584px;width:827px;height:17px;background:#1d1d1d;"></div>
<div class="r" style="left:6px;top:618px;width:827px;height:17px;background:#1d1d1d;"></div>
<div class="r" style="left:6px;top:414px;width:827px;height:1px;background:#4f4f59;"></div>
<div class="r" style="left:6px;top:431px;width:827px;height:1px;background:#4f4f59;"></div>
<div class="r" style="left:6px;top:448px;width:827px;height:1px;background:#3b3b40;"></div>
<div class="r" style="left:6px;top:465px;width:827px;height:1px;background:#3b3b40;"></div>
<div class="r" style="left:6px;top:482px;width:827px;height:1px;background:#3b3b40;"></div>
<div class="r" style="left:6px;top:499px;width:827px;height:1px;background:#3b3b40;"></div>
<div class="r" style="left:6px;top:516px;width:827px;height:1px;background:#3b3b40;"></div>
<div class="r" style="left:6px;top:533px;width:827px;height:1px;background:#3b3b40;"></div>
<div class="r" style="left:6px;top:550px;width:827px;height:1px;background:#3b3b40;"></div>
<div class="r" style="left:6px;top:567px;width:827px;height:1px;background:#3b3b40;"></div>
<div class="r" style="left:6px;top:584px;width:827px;height:1px;background:#3b3b40;"></div>
<div class="r" style="left:6px;top:601px;width:827px;height:1px;background:#3b3b40;"></div>
<div class="r" style="left:6px;top:618px;width:827px;height:1px;background:#3b3b40;"></div>
<div class="r" style="left:6px;top:635px;width:827px;height:1px;background:#3b3b40;"></div>
<div class="r" style="left:6px;top:414px;width:1px;height:264px;background:#4f4f59;"></div>
<div class="r" style="left:832px;top:414px;width:1px;height:264px;background:#4f4f59;"></div>
<div class="r" style="left:28px;top:414px;width:1px;height:264px;background:#3b3b40;"></div>
<div class="r" style="left:150px;top:414px;width:1px;height:264px;background:#3b3b40;"></div>
<div class="r" style="left:255px;top:414px;width:1px;height:264px;background:#3b3b40;"></div>
<div class="r" style="left:350px;top:414px;width:1px;height:264px;background:#3b3b40;"></div>
<div class="r" style="left:450px;top:414px;width:1px;height:264px;background:#3b3b40;"></div>
<div class="r" style="left:531px;top:414px;width:1px;height:264px;background:#3b3b40;"></div>
<div class="r" style="left:687px;top:414px;width:1px;height:264px;background:#3b3b40;"></div>
<div class="t" style="left:32.5px;top:418.40px;color:#fff;">Name</div>
<div class="t" style="left:156px;top:418.40px;color:#fff;">Color</div>
<div class="t" style="left:260.5px;top:418.40px;color:#fff;">Start</div>
<div class="t" style="left:355.5px;top:418.40px;color:#fff;">End</div>
<div class="t" style="left:456px;top:418.40px;color:#fff;">Size</div>
<div class="t" style="left:536px;top:418.40px;color:#fff;">Type</div>
<div class="t" style="left:692.5px;top:418.40px;color:#fff;">Value</div>
<svg style="left:246px;top:417px" width="7" height="6"><path d="M3.5 0L7 6H0Z" fill="#fff"/></svg>
<svg style="left:11px;top:433px" width="13" height="13"><rect x="0.5" y="0.5" width="12" height="12" fill="none" stroke="#454545"/><path d="M6.50 1.30L7.94 4.92L11.83 5.17L8.83 7.66L9.79 11.43L6.50 9.35L3.21 11.43L4.17 7.66L1.17 5.17L5.06 4.92Z" fill="none" stroke="#7a7a7a" stroke-width="1" stroke-linejoin="miter"/></svg>
<svg style="left:40px;top:436px" width="7" height="7"><path d="M0 0.5H7L3.5 6.5Z" fill="#4a9bf5"/></svg>
<div class="t" style="left:53px;top:435.40px;color:#4a9bf5;">pack</div>
<div class="t" style="left:260.5px;top:435.40px;color:#fff;">0x00000000</div>
<div class="t" style="left:355.5px;top:435.40px;color:#fff;">0x000000C9</div>
<div class="t" style="left:456px;top:435.40px;color:#fff;">0x00CA</div>
<div class="t" style="left:536px;top:435.40px;color:#fff;"><span style="color:#5a9ad8">struct</span> MessagePack</div>
<div class="t" style="left:692.5px;top:435.40px;color:#fff;width:140px;overflow:hidden;">{ ... }</div>
<svg style="left:11px;top:450px" width="13" height="13"><rect x="0.5" y="0.5" width="12" height="12" fill="none" stroke="#454545"/><path d="M6.50 1.30L7.94 4.92L11.83 5.17L8.83 7.66L9.79 11.43L6.50 9.35L3.21 11.43L4.17 7.66L1.17 5.17L5.06 4.92Z" fill="none" stroke="#7a7a7a" stroke-width="1" stroke-linejoin="miter"/></svg>
<div class="t" style="left:53.5px;top:452.40px;color:#fff;">type</div>
<div class="r" style="left:155px;top:450px;width:94px;height:11px;background:#2ca02c;border:1px solid #263050;"></div>
<div class="t" style="left:260.5px;top:452.40px;color:#fff;">0x00000000</div>
<div class="t" style="left:355.5px;top:452.40px;color:#fff;">0x00000000</div>
<div class="t" style="left:456px;top:452.40px;color:#fff;">0x0001</div>
<div class="t" style="left:536px;top:452.40px;color:#fff;"><span style="color:#5a9ad8">enum</span> Type</div>
<div class="t" style="left:692.5px;top:452.40px;color:#fff;width:140px;overflow:hidden;">Type::FixArray (0x94</div>
<svg style="left:11px;top:467px" width="13" height="13"><rect x="0.5" y="0.5" width="12" height="12" fill="none" stroke="#454545"/><path d="M6.50 1.30L7.94 4.92L11.83 5.17L8.83 7.66L9.79 11.43L6.50 9.35L3.21 11.43L4.17 7.66L1.17 5.17L5.06 4.92Z" fill="none" stroke="#7a7a7a" stroke-width="1" stroke-linejoin="miter"/></svg>
<svg style="left:50px;top:470px" width="7" height="7"><path d="M0 0.5H7L3.5 6.5Z" fill="#4a9bf5"/></svg>
<div class="t" style="left:64px;top:469.40px;color:#4a9bf5;">value</div>
<div class="t" style="left:260.5px;top:469.40px;color:#fff;">0x00000001</div>
<div class="t" style="left:355.5px;top:469.40px;color:#fff;">0x000000C9</div>
<div class="t" style="left:456px;top:469.40px;color:#fff;">0x00C9</div>
<div class="t" style="left:536px;top:469.40px;color:#fff;"><span style="color:#4ec9a0">MessagePack</span>[<span style="color:#3fd23f">4</span>]</div>
<div class="t" style="left:692.5px;top:469.40px;color:#fff;width:140px;overflow:hidden;">[ ... ]</div>
<svg style="left:11px;top:484px" width="13" height="13"><rect x="0.5" y="0.5" width="12" height="12" fill="none" stroke="#454545"/><path d="M6.50 1.30L7.94 4.92L11.83 5.17L8.83 7.66L9.79 11.43L6.50 9.35L3.21 11.43L4.17 7.66L1.17 5.17L5.06 4.92Z" fill="none" stroke="#7a7a7a" stroke-width="1" stroke-linejoin="miter"/></svg>
<svg style="left:60px;top:487px" width="7" height="7"><path d="M0 0.5H7L3.5 6.5Z" fill="#fff"/></svg>
<div class="t" style="left:73px;top:486.40px;color:#fff;">[0]</div>
<div class="t" style="left:260.5px;top:486.40px;color:#fff;">0x00000001</div>
<div class="t" style="left:355.5px;top:486.40px;color:#fff;">0x00000007</div>
<div class="t" style="left:456px;top:486.40px;color:#fff;">0x0007</div>
<div class="t" style="left:536px;top:486.40px;color:#fff;"><span style="color:#5a9ad8">struct</span> MessagePack</div>
<div class="t" style="left:692.5px;top:486.40px;color:#fff;width:140px;overflow:hidden;">{ ... }</div>
<svg style="left:11px;top:501px" width="13" height="13"><rect x="0.5" y="0.5" width="12" height="12" fill="none" stroke="#454545"/><path d="M6.50 1.30L7.94 4.92L11.83 5.17L8.83 7.66L9.79 11.43L6.50 9.35L3.21 11.43L4.17 7.66L1.17 5.17L5.06 4.92Z" fill="none" stroke="#7a7a7a" stroke-width="1" stroke-linejoin="miter"/></svg>
<div class="t" style="left:73.5px;top:503.40px;color:#fff;">type</div>
<div class="r" style="left:155px;top:501px;width:94px;height:11px;background:#2ca02c;border:1px solid #263050;"></div>
<div class="t" style="left:260.5px;top:503.40px;color:#fff;">0x00000001</div>
<div class="t" style="left:355.5px;top:503.40px;color:#fff;">0x00000001</div>
<div class="t" style="left:456px;top:503.40px;color:#fff;">0x0001</div>
<div class="t" style="left:536px;top:503.40px;color:#fff;"><span style="color:#5a9ad8">enum</span> Type</div>
<div class="t" style="left:692.5px;top:503.40px;color:#fff;width:140px;overflow:hidden;">Type::FixStr (0xA6)</div>
<svg style="left:11px;top:518px" width="13" height="13"><rect x="0.5" y="0.5" width="12" height="12" fill="none" stroke="#454545"/><path d="M6.50 1.30L7.94 4.92L11.83 5.17L8.83 7.66L9.79 11.43L6.50 9.35L3.21 11.43L4.17 7.66L1.17 5.17L5.06 4.92Z" fill="none" stroke="#7a7a7a" stroke-width="1" stroke-linejoin="miter"/></svg>
<div class="t" style="left:73.5px;top:520.40px;color:#fff;">value</div>
<div class="r" style="left:155px;top:518px;width:94px;height:11px;background:#17becf;border:1px solid #263050;"></div>
<div class="t" style="left:260.5px;top:520.40px;color:#fff;">0x00000002</div>
<div class="t" style="left:355.5px;top:520.40px;color:#fff;">0x00000007</div>
<div class="t" style="left:456px;top:520.40px;color:#fff;">0x0006</div>
<div class="t" style="left:536px;top:520.40px;color:#fff;"><span style="color:#4ec9a0">String</span></div>
<div class="t" style="left:692.5px;top:520.40px;color:#fff;width:140px;overflow:hidden;">"SOLMET"</div>
<svg style="left:11px;top:535px" width="13" height="13"><rect x="0.5" y="0.5" width="12" height="12" fill="none" stroke="#454545"/><path d="M6.50 1.30L7.94 4.92L11.83 5.17L8.83 7.66L9.79 11.43L6.50 9.35L3.21 11.43L4.17 7.66L1.17 5.17L5.06 4.92Z" fill="none" stroke="#7a7a7a" stroke-width="1" stroke-linejoin="miter"/></svg>
<svg style="left:61px;top:538px" width="7" height="7"><path d="M0.5 0V7L6 3.5Z" fill="#fff"/></svg>
<div class="t" style="left:73px;top:537.40px;color:#fff;">[1]</div>
<div class="t" style="left:260.5px;top:537.40px;color:#fff;">0x00000008</div>
<div class="t" style="left:355.5px;top:537.40px;color:#fff;">0x00000008</div>
<div class="t" style="left:456px;top:537.40px;color:#fff;">0x0001</div>
<div class="t" style="left:536px;top:537.40px;color:#fff;"><span style="color:#5a9ad8">struct</span> MessagePack</div>
<div class="t" style="left:692.5px;top:537.40px;color:#fff;width:140px;overflow:hidden;">{ ... }</div>
<svg style="left:11px;top:552px" width="13" height="13"><rect x="0.5" y="0.5" width="12" height="12" fill="none" stroke="#454545"/><path d="M6.50 1.30L7.94 4.92L11.83 5.17L8.83 7.66L9.79 11.43L6.50 9.35L3.21 11.43L4.17 7.66L1.17 5.17L5.06 4.92Z" fill="none" stroke="#7a7a7a" stroke-width="1" stroke-linejoin="miter"/></svg>
<svg style="left:61px;top:555px" width="7" height="7"><path d="M0.5 0V7L6 3.5Z" fill="#fff"/></svg>
<div class="t" style="left:73px;top:554.40px;color:#fff;">[2]</div>
<div class="t" style="left:260.5px;top:554.40px;color:#fff;">0x00000009</div>
<div class="t" style="left:355.5px;top:554.40px;color:#fff;">0x00000009</div>
<div class="t" style="left:456px;top:554.40px;color:#fff;">0x0001</div>
<div class="t" style="left:536px;top:554.40px;color:#fff;"><span style="color:#5a9ad8">struct</span> MessagePack</div>
<div class="t" style="left:692.5px;top:554.40px;color:#fff;width:140px;overflow:hidden;">{ ... }</div>
<svg style="left:11px;top:569px" width="13" height="13"><rect x="0.5" y="0.5" width="12" height="12" fill="none" stroke="#454545"/><path d="M6.50 1.30L7.94 4.92L11.83 5.17L8.83 7.66L9.79 11.43L6.50 9.35L3.21 11.43L4.17 7.66L1.17 5.17L5.06 4.92Z" fill="none" stroke="#7a7a7a" stroke-width="1" stroke-linejoin="miter"/></svg>
<svg style="left:60px;top:572px" width="7" height="7"><path d="M0 0.5H7L3.5 6.5Z" fill="#4a9bf5"/></svg>
<div class="t" style="left:73px;top:571.40px;color:#4a9bf5;">[3]</div>
<div class="t" style="left:260.5px;top:571.40px;color:#fff;">0x0000000A</div>
<div class="t" style="left:355.5px;top:571.40px;color:#fff;">0x000000C9</div>
<div class="t" style="left:456px;top:571.40px;color:#fff;">0x00C0</div>
<div class="t" style="left:536px;top:571.40px;color:#fff;"><span style="color:#5a9ad8">struct</span> MessagePack</div>
<div class="t" style="left:692.5px;top:571.40px;color:#fff;width:140px;overflow:hidden;">{ ... }</div>
<svg style="left:11px;top:586px" width="13" height="13"><rect x="0.5" y="0.5" width="12" height="12" fill="none" stroke="#454545"/><path d="M6.50 1.30L7.94 4.92L11.83 5.17L8.83 7.66L9.79 11.43L6.50 9.35L3.21 11.43L4.17 7.66L1.17 5.17L5.06 4.92Z" fill="none" stroke="#7a7a7a" stroke-width="1" stroke-linejoin="miter"/></svg>
<div class="t" style="left:73.5px;top:588.40px;color:#fff;">type</div>
<div class="r" style="left:155px;top:586px;width:94px;height:11px;background:#d62728;border:1px solid #263050;"></div>
<div class="t" style="left:260.5px;top:588.40px;color:#fff;">0x0000000A</div>
<div class="t" style="left:355.5px;top:588.40px;color:#fff;">0x0000000A</div>
<div class="t" style="left:456px;top:588.40px;color:#fff;">0x0001</div>
<div class="t" style="left:536px;top:588.40px;color:#fff;"><span style="color:#5a9ad8">enum</span> Type</div>
<div class="t" style="left:692.5px;top:588.40px;color:#fff;width:140px;overflow:hidden;">Type::Bin8 (0xC4)</div>
<svg style="left:11px;top:603px" width="13" height="13"><rect x="0.5" y="0.5" width="12" height="12" fill="none" stroke="#454545"/><path d="M6.50 1.30L7.94 4.92L11.83 5.17L8.83 7.66L9.79 11.43L6.50 9.35L3.21 11.43L4.17 7.66L1.17 5.17L5.06 4.92Z" fill="none" stroke="#7a7a7a" stroke-width="1" stroke-linejoin="miter"/></svg>
<div class="t" style="left:73.5px;top:605.40px;color:#fff;">length</div>
<div class="r" style="left:155px;top:603px;width:94px;height:11px;background:#bcbd22;border:1px solid #263050;"></div>
<div class="t" style="left:260.5px;top:605.40px;color:#fff;">0x0000000B</div>
<div class="t" style="left:355.5px;top:605.40px;color:#fff;">0x0000000B</div>
<div class="t" style="left:456px;top:605.40px;color:#fff;">0x0001</div>
<div class="t" style="left:536px;top:605.40px;color:#fff;"><span style="color:#4ec9a0">u8</span></div>
<div class="t" style="left:692.5px;top:605.40px;color:#fff;width:140px;overflow:hidden;">190 (0xBE)</div>
<svg style="left:11px;top:620px" width="13" height="13"><rect x="0.5" y="0.5" width="12" height="12" fill="none" stroke="#454545"/><path d="M6.50 1.30L7.94 4.92L11.83 5.17L8.83 7.66L9.79 11.43L6.50 9.35L3.21 11.43L4.17 7.66L1.17 5.17L5.06 4.92Z" fill="none" stroke="#7a7a7a" stroke-width="1" stroke-linejoin="miter"/></svg>
<svg style="left:71px;top:623px" width="7" height="7"><path d="M0.5 0V7L6 3.5Z" fill="#4a9bf5"/></svg>
<div class="t" style="left:84px;top:622.40px;color:#4a9bf5;">value</div>
<div class="t" style="left:260.5px;top:622.40px;color:#fff;">0x0000000C</div>
<div class="t" style="left:355.5px;top:622.40px;color:#fff;">0x000000C9</div>
<div class="t" style="left:456px;top:622.40px;color:#fff;">0x00BE</div>
<div class="t" style="left:536px;top:622.40px;color:#fff;"><span style="color:#4ec9a0">u8</span>[<span style="color:#3fd23f">190</span>]</div>
<div class="t" style="left:692.5px;top:622.40px;color:#fff;width:140px;overflow:hidden;">[ ... ]</div>
</div></body></html>
